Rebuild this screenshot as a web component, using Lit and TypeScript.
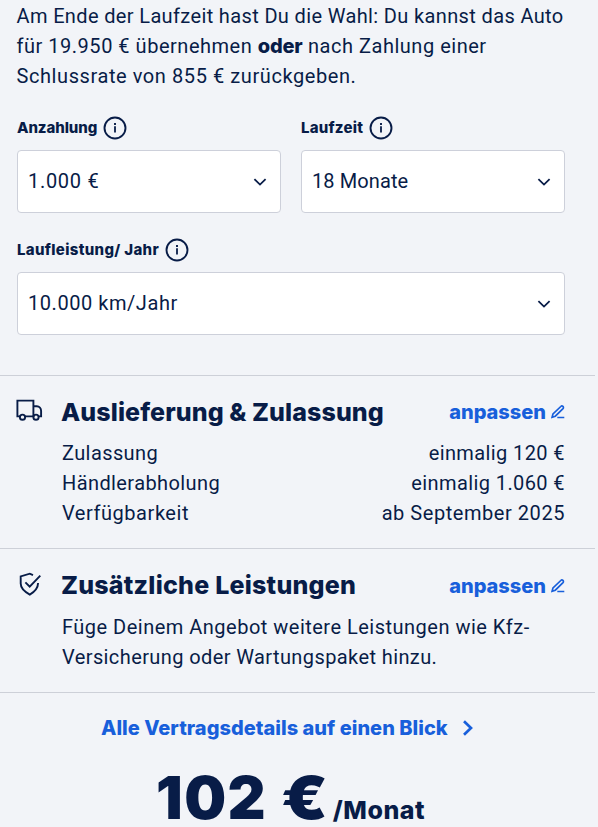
import { LitElement, html, css, svg } from "lit";
import { customElement, property } from "lit/decorators.js";

@customElement("info-icon")
class InfoIcon extends LitElement {
  static styles = css`
    :host { display: block; width: 24px; height: 24px; }
    svg { display: block; }
  `;
  render() {
    return html`<svg width="24" height="24" viewBox="0 0 24 24" fill="none" stroke="#081c47">
      <circle cx="12" cy="12" r="10.5" stroke-width="1.9" />
      <path d="M12 10.3v6.2" stroke-width="1.8" />
      <path d="M12 7v1.9" stroke-width="1.9" />
    </svg>`;
  }
}

@customElement("select-field")
class SelectField extends LitElement {
  @property() label = "";
  @property() value = "";
  static styles = css`
    :host { display: block; }
    .label { display: flex; align-items: center; gap: 6px; height: 24px; margin-bottom: 10px; font: 800 15px/24px Inter, sans-serif; white-space: nowrap; }
    .label span { letter-spacing: var(--label-spacing, 0); }
    .box { box-sizing: border-box; height: 63px; border: 1px solid #cdd0da; border-radius: 4px; background: #fff; display: flex; align-items: center; justify-content: space-between; padding: 0 13px 2px 10px; }
    .value { letter-spacing: var(--value-spacing, 0); white-space: nowrap; }
    svg { margin-top: 3px; }
  `;
  render() {
    return html`
      <div class="label"><span>${this.label}</span><info-icon></info-icon></div>
      <div class="box">
        <span class="value">${this.value}</span>
        <svg width="14" height="10" viewBox="0 0 14 10" fill="none" stroke="#081c47" stroke-width="1.8"><path d="M1.4 2.2L7 7.6l5.6-5.4" /></svg>
      </div>`;
  }
}

const truck = svg`
  <path d="M4 17.4H1.4V1.6h16v15.8H9M17.4 7.3h3.4c2.5 0 4.3 2.1 4.3 4.8v5.3h-2.4M17.2 17.4H9" />
  <circle cx="6.5" cy="18.2" r="2.6" /><circle cx="20" cy="18.2" r="2.6" />`;
const shield = svg`
  <path d="M14 3.1L10.8 1.7 1.7 4.4v7.2c0 4.8 3.8 8.2 9.1 11 4.8-2.8 8.2-6 8.3-11.6" />
  <path d="M6.4 10.3l4.3 4.3L21.3 3.6" />`;

@customElement("edit-link")
class EditLink extends LitElement {
  static styles = css`
    :host { display: flex; align-items: center; gap: 5px; color: #185fdb; font: 800 20px/30px Inter, sans-serif; }
    span { letter-spacing: 0; }
  `;
  render() {
    return html`<span>anpassen</span>
      <svg width="14" height="14" viewBox="0 0 14 14" fill="none" stroke="#185fdb" stroke-width="1.7">
        <path d="M1.1 12.2l.9-3.3L9.8 1.5a1.5 1.5 0 0 1 2.2 2.1L4.3 11.2zM6.3 12.5h7" />
      </svg>`;
  }
}

@customElement("app-root")
class AppRoot extends LitElement {
  static styles = css`
    :host { display: block; height: 827px; overflow: hidden; background: #f2f4f8; color: #081c47; font: 400 20px/30px Roboto, sans-serif; }
    .page { width: 595px; }
    .line { display: block; white-space: nowrap; }
    .config { box-sizing: border-box; height: 376px; padding: 1px 30px 0 16.5px; border-bottom: 1px solid #cdd0d8; }
    .fields { display: grid; grid-template-columns: 264px 264px; column-gap: 20px; row-gap: 25px; margin: 25px 0 0 0.5px; }
    .wide { grid-column: span 2; --label-spacing: 0.32px; --value-spacing: 0.55px; }
    .deposit { --label-spacing: -0.1px; --value-spacing: 0.7px; }
    .term { --label-spacing: 0.22px; --value-spacing: 0.1px; }
    .s1 { letter-spacing: 0.36px; }
    .s2 { letter-spacing: 0.52px; }
    .s3 { letter-spacing: 0.58px; }
    .s4 { letter-spacing: 0.49px; }
    .s5 { letter-spacing: 0.4px; }
    b { font: 800 20px/20px Inter, sans-serif; letter-spacing: -0.2px; }
    .section { box-sizing: border-box; display: grid; grid-template-columns: 45px 1fr; padding: 20px 30px 0 17px; border-bottom: 1px solid #cdd0d8; }
    .delivery { height: 173px; }
    .extras { height: 144px; }
    .head { display: flex; justify-content: space-between; align-items: center; height: 32px; margin-bottom: 10px; }
    .extras .head { margin-bottom: 11px; }
    .extras edit-link { margin-top: 2px; }
    h2 { margin: 0 0 0 -1px; font: 800 25px/32px Inter, sans-serif; letter-spacing: 0.09px; white-space: nowrap; }
    .extras h2 { letter-spacing: 0.23px; }
    .row { display: flex; justify-content: space-between; letter-spacing: 0.4px; }
    .row:last-child { letter-spacing: 0.55px; }
    .truck { margin: 3px 0 0 -1px; }
    .shield { margin: 3px 0 0 2px; }
    .all { display: flex; align-items: center; gap: 12px; margin: 20px 0 0 101px; color: #185fdb; font: 800 20px/30px Inter, sans-serif; }
    .all span { width: 349px; letter-spacing: 0.02px; white-space: nowrap; }
    .price { display: flex; align-items: baseline; height: 58px; margin: 26px 0 0 156px; white-space: nowrap; }
    .amount { font: 900 59px/58px Inter, sans-serif; letter-spacing: 1.5px; }
    .euro { display: inline-block; transform: scaleX(1.14); transform-origin: left; letter-spacing: 0; }
    .per { font: 800 25px/30px Inter, sans-serif; letter-spacing: 0.5px; margin-left: 11px; }
  `;
  render() {
    const icon = (cls: string, art: unknown) => html`<svg class=${cls} width="27" height="24" viewBox="0 0 27 24" fill="none" stroke="#081c47" stroke-width="1.9">${art}</svg>`;
    const rows = [
      ["Zulassung", "einmalig 120 €"],
      ["Händlerabholung", "einmalig 1.060 €"],
      ["Verfügbarkeit", "ab September 2025"],
    ];
    return html`<div class="page">
      <div class="config">
        <div>
          <span class="line s1">Am Ende der Laufzeit hast Du die Wahl: Du kannst das Auto</span>
          <span class="line s2">für 19.950 € übernehmen <b>oder</b> nach Zahlung einer</span>
          <span class="line s3">Schlussrate von 855 € zurückgeben.</span>
        </div>
        <div class="fields">
          <select-field class="deposit" label="Anzahlung" value="1.000 €"></select-field>
          <select-field class="term" label="Laufzeit" value="18 Monate"></select-field>
          <select-field class="wide" label="Laufleistung/ Jahr" value="10.000 km/Jahr"></select-field>
        </div>
      </div>
      <div class="section delivery">
        ${icon("truck", truck)}
        <div>
          <div class="head"><h2>Auslieferung &amp; Zulassung</h2><edit-link></edit-link></div>
          ${rows.map(([k, v]) => html`<div class="row"><span>${k}</span><span>${v}</span></div>`)}
        </div>
      </div>
      <div class="section extras">
        ${icon("shield", shield)}
        <div>
          <div class="head"><h2>Zusätzliche Leistungen</h2><edit-link></edit-link></div>
          <span class="line s4">Füge Deinem Angebot weitere Leistungen wie Kfz-</span>
          <span class="line s5">Versicherung oder Wartungspaket hinzu.</span>
        </div>
      </div>
      <div class="all"><span>Alle Vertragsdetails auf einen Blick</span>
        <svg width="12" height="16" viewBox="0 0 12 16" fill="none" stroke="#185fdb" stroke-width="2.7"><path d="M2 1.2L9 8l-7 6.8" /></svg>
      </div>
      <div class="price"><span class="amount">102 <span class="euro">€</span></span><span class="per">/Monat</span></div>
    </div>`;
  }
}
